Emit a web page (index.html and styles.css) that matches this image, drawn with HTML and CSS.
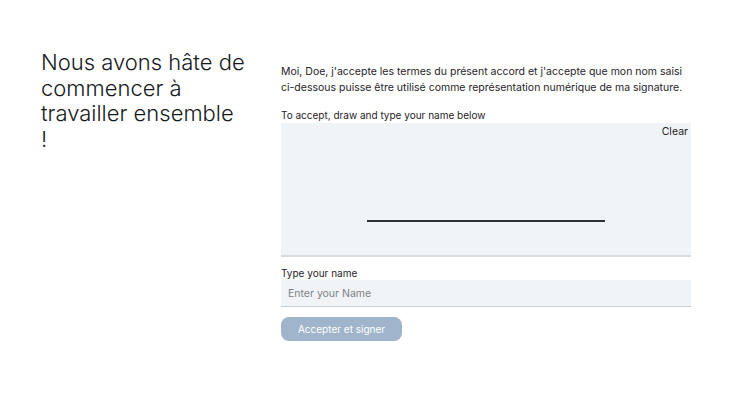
FILE: index.html
```html
<!DOCTYPE html>
<html lang="fr">
<head>
    <meta charset="UTF-8">
    <meta name="viewport" content="width=device-width, initial-scale=1.0">
    <title>Signature</title>
    <link rel="stylesheet" href="styles.css">
</head>
<body>
    <div class="container">
        <h1 class="title">Nous avons hâte de commencer à travailler ensemble !</h1>
        <form class="sign-form">
            <p class="agreement">Moi, Doe, j'accepte les termes du présent accord et j'accepte que mon nom saisi ci-dessous puisse être utilisé comme représentation numérique de ma signature.</p>
            <label class="field-label">To accept, draw and type your name below</label>
            <div class="sign-pad">
                <button type="button" class="clear-btn">Clear</button>
                <div class="sign-line"></div>
            </div>
            <label class="field-label" for="name">Type your name</label>
            <input type="text" id="name" class="name-input" placeholder="Enter your Name">
            <button type="submit" class="submit-btn">Accepter et signer</button>
        </form>
    </div>
</body>
</html>
```

FILE: styles.css
```css
body {
    margin: 0;
    font-family: Inter, "Liberation Sans", sans-serif;
    color: #1f2328;
    background: #fff;
}

.container {
    display: flex;
    gap: 36px;
    padding: 50px 59px 0 41px;
}

.title {
    width: 204px;
    flex-shrink: 0;
    margin: 0;
    font-size: 22px;
    font-weight: 300;
    line-height: 25.5px;
    letter-spacing: 0;
    color: #16191c;
}

.sign-form {
    flex: 1;
    display: flex;
    flex-direction: column;
    padding-top: 14px;
}

.agreement {
    margin: 0 0 12px;
    font-size: 10.5px;
    line-height: 16px;
}

.field-label {
    display: block;
    font-size: 10px;
    line-height: 14px;
}

.sign-pad {
    position: relative;
    height: 132px;
    margin-top: 1px;
    background: #f1f4f7;
    border-bottom: 2px solid #d9dcdf;
    margin-bottom: 9px;
}

.clear-btn {
    position: absolute;
    top: 2px;
    right: 3px;
    border: none;
    background: none;
    font-family: inherit;
    font-size: 10.5px;
    color: #1f2328;
    padding: 0;
    cursor: pointer;
}

.sign-line {
    position: absolute;
    left: 86px;
    width: 238px;
    top: 97px;
    height: 2px;
    background: #2e3236;
}

.name-input {
    height: 26px;
    border: none;
    border-bottom: 1px solid #c9cdd1;
    background: #f1f4f7;
    padding: 0 7px;
    font-family: inherit;
    font-size: 10.5px;
    margin-bottom: 10px;
}

.name-input::placeholder {
    color: #7c8288;
}

.submit-btn {
    align-self: flex-start;
    width: 121px;
    height: 24px;
    border: none;
    border-radius: 8px;
    background: #a0b5cb;
    color: #fff;
    font-family: inherit;
    font-size: 10px;
    cursor: pointer;
}
```
